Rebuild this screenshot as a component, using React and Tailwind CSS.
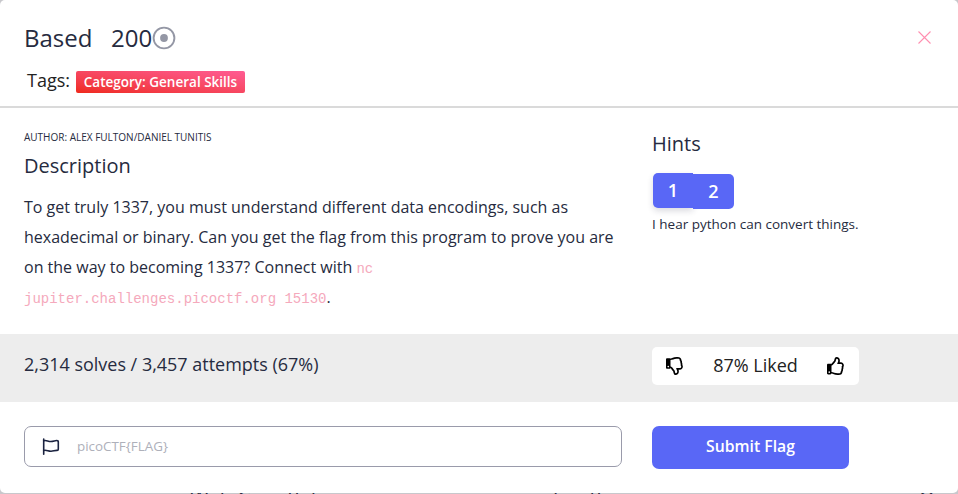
import { FaRegThumbsUp, FaRegThumbsDown } from "react-icons/fa";

const hints = ["1", "2"];

function FlagIcon() {
  return (
    <svg width="18" height="18" viewBox="0 0 18 18" fill="none" stroke="#1b2340" strokeWidth="1.6" strokeLinecap="round" strokeLinejoin="round">
      <path d="M1.700 1v15.200" />
      <path d="M1.700 2.800C4 1.800 6 3.600 9 3.500c2.800-.1 4.200-1.200 6.200-.9 1 .1 1.100.5 1.100 1.200v7.400c0 .9-.4 1.200-1.200 1.200-2.100-.2-4 .9-6.300.8-2.800-.1-4.500-1.500-7.100-.8" />
    </svg>
  );
}

export default function App() {
  return (
    <div className="h-[494px] w-[958px] overflow-hidden bg-[#c8c8cc] font-['Open_Sans',sans-serif] text-[#262b40]">
      <main className="h-[493px] overflow-hidden rounded-[5px] bg-white">
        <header className="flex h-[108px] justify-between border-b-2 border-[#dadada] pl-6 pr-[27px]">
          <div>
            <div className="mt-[22px] flex h-8 items-center text-[24px] leading-8">
              <h1 className="w-[87px]">Based</h1>
              <span>200</span>
              <svg width="24" height="24" viewBox="0 0 24 24">
                <circle cx="12" cy="12" r="10.400" fill="none" stroke="#9497a5" strokeWidth="1.900" />
                <circle cx="12" cy="12" r="3.900" fill="#9497a5" />
              </svg>
            </div>
            <div className="mt-3 flex h-7 items-start pl-[3px] text-[18px] leading-7 text-[#222]">
              <span className="w-[49px]">Tags:</span>
              <span className="mt-[5px] h-[22px] w-[169px] rounded-[2px] bg-linear-to-tr from-[#ef2919] to-[#ff5b93] text-center text-[13.500px] leading-[23px] font-semibold text-white">Category: General Skills</span>
            </div>
          </div>
          <button className="mt-[31px] flex h-[13px] w-[13px]" aria-label="Close">
            <svg width="13" height="13" viewBox="0 0 13 13" fill="none" stroke="#ff8fb0" strokeWidth="1.1">
              <path d="M.5 .5L12.500 12.500M12.500 .5L.5 12.500" />
            </svg>
          </button>
        </header>
        <section className="flex h-[225.500px] pl-6">
          <div className="w-[628px]">
            <p className="mt-[21px] h-4 text-[10px] leading-4">AUTHOR: ALEX FULTON/DANIEL TUNITIS</p>
            <h2 className="mt-[7px] text-[20px] leading-7">Description</h2>
            <p className="mt-3 w-[600px] text-[16.015px] leading-[30px]">
              To get truly 1337, you must understand different data encodings, such as<br />
              hexadecimal or binary. Can you get the flag from this program to prove you are<br />
              on the way to becoming 1337? Connect with <code className="font-['Liberation_Mono',monospace] text-[14px] leading-[26px] text-[#f5a9bc]">nc<br />jupiter.challenges.picoctf.org 15130</code>.
            </p>
          </div>
          <aside>
            <h2 className="mt-[22px] text-[20px] leading-7">Hints</h2>
            <div className="mt-[15px] ml-px flex h-9 text-[18px] leading-[33px] font-semibold text-white">
              <button className="h-[35px] w-10 rounded-l-[5px] bg-[#5967f6] pb-px shadow-[0_3px_6px_rgba(30,30,60,0.16)]">{hints[0]}</button>
              <button className="mt-px h-[35px] w-[41px] rounded-r-[5px] bg-[#5967f6] pb-px">{hints[1]}</button>
            </div>
            <p className="mt-[5px] text-[13.500px] leading-5">I hear python can convert things.</p>
          </aside>
        </section>
        <section className="flex h-[68px] bg-[#ededed] pl-6">
          <p className="w-[628px] pt-[15.500px] text-[17.980px] leading-[30px]">2,314 solves / 3,457 attempts (67%)</p>
          <div className="mt-[13px] flex h-[38px] w-[207px] items-center justify-between rounded-[5px] bg-white px-[14px] text-[18px] text-[#222]">
            <FaRegThumbsDown className="size-[18px] text-black" />
            <span>87% Liked</span>
            <FaRegThumbsUp className="size-[18px] text-black" />
          </div>
        </section>
        <form className="flex pl-6">
          <label className="mt-[24.500px] mr-[30px] flex h-[41px] w-[598px] items-center rounded-[7px] border border-[#9a9bab] pl-[17px]">
            <FlagIcon />
            <input className="ml-[17px] w-[500px] bg-transparent text-[13.400px] outline-none placeholder:text-[#aeb0ba]" placeholder="picoCTF{FLAG}" />
          </label>
          <button type="button" className="mt-6 h-[43px] w-[197px] rounded-[7px] bg-[#5967f6] text-[15.750px] font-semibold text-white">Submit Flag</button>
        </form>
      </main>
      <div className="flex h-px overflow-hidden text-[20px] leading-[28px]">
        <span className="-mt-[9px] w-[363px] shrink-0 ml-[190px]">Web Gauntlet</span>
        <span className="-mt-[9px] w-[366px] shrink-0">to others</span>
        <span className="-mt-[9px] shrink-0">One</span>
      </div>
    </div>
  );
}
